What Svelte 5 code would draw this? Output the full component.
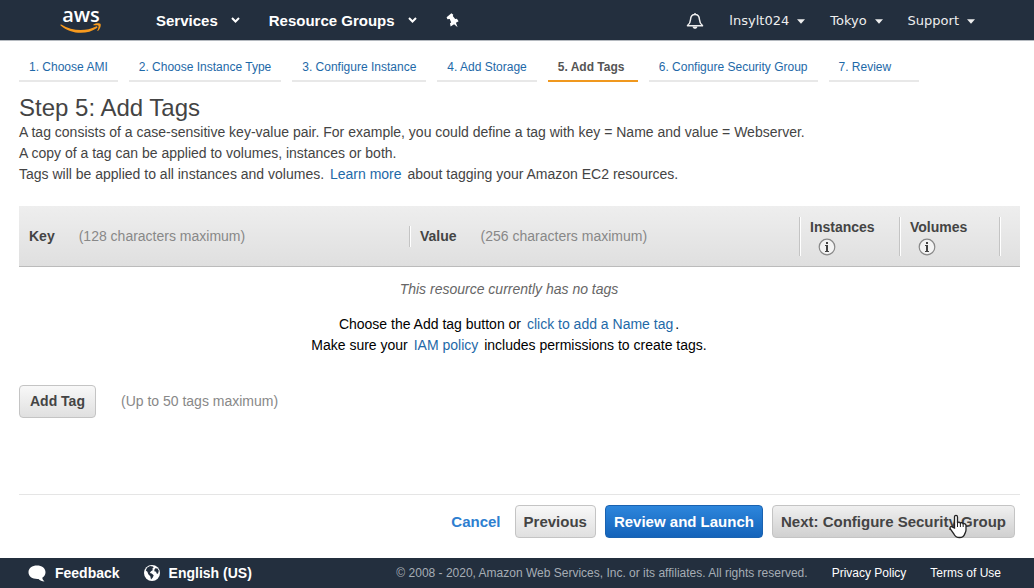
<script>
	const steps = [
		'1. Choose AMI',
		'2. Choose Instance Type',
		'3. Configure Instance',
		'4. Add Storage',
		'5. Add Tags',
		'6. Configure Security Group',
		'7. Review'
	];
	const account = ['lnsylt024', 'Tokyo', 'Support'];

	let current = 4;
</script>

<div class="page">
	<header>
		<a class="logo" href="/" aria-label="aws">
			<span>aws</span>
			<svg width="42" height="11" viewBox="0 0 42 11">
				<path d="M1.200 1.500C12 8 25 9 36 3.500c1.200-.6 2 .6 1 1.400C27 12 11 11.500.600 2.400c-.6-.6-.1-1.300.600-.900z" fill="#f79a1e" />
				<path d="M33.500 1.500c2-1.500 6.200-1.500 7 -.6s-.3 5.200-2.600 7c-.4.300-.7.100-.5-.3.800-1.800 1.500-4.200 1.100-4.900s-3-.5-4.700-.4c-.5 0-.7-.5-.3-.8z" fill="#f79a1e" />
			</svg>
		</a>
		<nav class="main-nav">
			<button>
				Services
				<svg width="9" height="6" viewBox="0 0 9 6"><path d="M1 1l3.500 3.500L8 1" /></svg>
			</button>
			<button>
				Resource Groups
				<svg width="9" height="6" viewBox="0 0 9 6"><path d="M1 1l3.500 3.500L8 1" /></svg>
			</button>
			<button class="pin" aria-label="Pin shortcuts">
				<svg width="13" height="15" viewBox="0 0 13 15">
					<path d="M.6 4.200L5.400.300l1.900 1.400-.5 1.300 2.400 3 1.700-.3 1.700 2.600-2.700 1.500 1.700 4.500-3.500-3.100-3.500 2.400L4 10.300l1.200-.9L3.700 5.900l-2.300.3z" />
				</svg>
			</button>
		</nav>
		<nav class="account-nav">
			<button aria-label="Notifications">
				<svg width="18" height="18" viewBox="0 0 18 18">
					<path class="outline" d="M9 1v1.500M1.500 13.700c2.200-1.700 2.800-3 3-6C4.700 4.300 6.200 2.500 9 2.500s4.300 1.800 4.500 5.200c.2 3 .8 4.300 3 6z" />
					<path d="M6.500 14.500h5c-.3 1.600-1.300 2.300-2.500 2.300s-2.200-.7-2.500-2.300z" />
				</svg>
			</button>
			{#each account as item}
				<button>
					{item}
					<svg width="8" height="5" viewBox="0 0 8 5"><path d="M0 .300h8L4 4.800z" /></svg>
				</button>
			{/each}
		</nav>
	</header>

	<main>
		<ol class="steps">
			{#each steps as step, i}
				<li class:active={i === current}>
					{#if i === current}
						{step}
					{:else}
						<a href="#step{i + 1}">{step}</a>
					{/if}
				</li>
			{/each}
		</ol>

		<h1>Step 5: Add Tags</h1>
		<p>
			A tag consists of a case-sensitive key-value pair. For example, you could define a tag with key = Name and value = Webserver.<br />
			A copy of a tag can be applied to volumes, instances or both.<br />
			Tags will be applied to all instances and volumes. <a class="inline" href="#learn">Learn more</a> about tagging your Amazon EC2 resources.
		</p>

		<table>
			<thead>
				<tr>
					<th><div class="cell">Key <span class="hint">(128 characters maximum)</span></div></th>
					<th><div class="cell value">Value <span class="hint">(256 characters maximum)</span></div></th>
					{#each ['Instances', 'Volumes'] as name}
						<th class="narrow">
							<div class="cell check">
								{name}
								<svg width="18" height="18" viewBox="0 0 18 18">
									<circle cx="9" cy="9" r="7.800" fill="#f4f4f4" stroke="#888" stroke-width="1.200" />
									<path d="M8 4h2v2H8zM7 7h3v6h1v1H7v-1h1V8H7z" fill="#444" />
								</svg>
							</div>
						</th>
					{/each}
					<td class="end"><div class="cell check"></div></td>
				</tr>
			</thead>
			<tbody>
				<tr>
					<td colspan="4" class="empty">
						<em>This resource currently has no tags</em>
						<p>
							Choose the Add tag button or <a class="inline" href="#name-tag">click to add a Name tag</a>.<br />
							Make sure your <a class="inline" href="#iam">IAM policy</a> includes permissions to create tags.
						</p>
					</td>
					<td></td>
				</tr>
			</tbody>
		</table>

		<div class="add">
			<button class="btn">Add Tag</button>
			<span class="hint">(Up to 50 tags maximum)</span>
		</div>

		<div class="actions">
			<a class="cancel" href="#cancel">Cancel</a>
			<button class="btn">Previous</button>
			<button class="btn primary">Review and Launch</button>
			<button class="btn hover">
				Next: Configure Security Group
				<svg class="pointer" width="19" height="25" viewBox="0 0 19 25">
					<path d="M5.500 14V3c0-2.300 3-2.300 3 0v6c.6-1.300 2.600-1 2.900.3.700-1 2.500-.7 2.800.7.900-.8 2.800-.2 2.800 1.400V16c0 2-1 3-1.500 4.500-.7 2-2 3-5 3-3.400 0-4.500-1.300-5.500-3.300L1.300 15c-.9-2 .9-3.200 2.300-1.900z" fill="#fff" stroke="#222" stroke-width="1.300" />
					<path d="M8.500 9v4M11.400 9.500V13M14.200 10.500V13" stroke="#222" />
				</svg>
			</button>
		</div>
	</main>

	<footer>
		<button>
			<svg width="18" height="17" viewBox="0 0 18 17">
				<path d="M9 .5c4.800 0 8.500 2.700 8.500 6.700 0 2.500-1.300 4.400-3.200 5.600.2 1.400.8 2.500 2.200 3.700-2.600-.2-4.600-1-6-2.600C4.700 14.300.500 11.500.500 7.200.500 3.200 4.200.500 9 .500z" fill="#fff" />
			</svg>
			Feedback
		</button>
		<button>
			<svg width="16" height="16" viewBox="0 0 16 16">
				<circle cx="8" cy="8" r="8" fill="#fff" />
				<path d="M3 2.800L6 1l3 .4.600 1.400-1.400.9.700 1.200L7 6.300 5.800 8l1.900.5 2 1.800-.9 2.200L7 14.600l-.7-3.400-2-2L3.400 6.800 1.800 5.500zM11.200 3.300l2.300.1 1.300 2.400-.8 3-1.400-.2-.5-1.900-1.800-.5.200-1.600z" fill="#232f3e" />
			</svg>
			English (US)
		</button>
		<small>© 2008 - 2020, Amazon Web Services, Inc. or its affiliates. All rights reserved.</small>
		<a href="#privacy">Privacy Policy</a>
		<a href="#terms">Terms of Use</a>
	</footer>
</div>

<style>
	:global(body) {
		background: #fff;
		color: #444;
		font-family: "Liberation Sans", Arial, sans-serif;
		font-size: 14px;
		line-height: 21px;
	}

	.page {
		display: flex;
		flex-direction: column;
		min-height: 100vh;
	}

	button {
		font: inherit;
		margin: 0;
		cursor: pointer;
	}

	a {
		color: #1e69a8;
		text-decoration: none;
	}

	header {
		display: flex;
		align-items: center;
		height: 41px;
		padding: 0 59px 0 60px;
		background: #232f3e;
		border-bottom: 1px solid #b5bac0;
		box-sizing: border-box;
	}

	header button,
	footer button {
		display: flex;
		align-items: center;
		padding: 0;
		border: 0;
		background: none;
		color: #fff;
		white-space: nowrap;
	}

	.logo {
		display: flex;
		flex-direction: column;
		width: 42px;
		color: #fff;
		font: 600 20px/17px "Open Sans", sans-serif;
		text-align: center;
	}

	.main-nav {
		display: flex;
		flex: 1;
		gap: 29px;
		margin-left: 54px;
		font-size: 15px;
		font-weight: bold;
	}

	.main-nav button {
		gap: 13px;
	}

	.main-nav path {
		fill: none;
		stroke: #fff;
		stroke-width: 2;
	}

	.main-nav .pin path {
		fill: #fff;
		stroke: none;
	}

	.account-nav {
		display: flex;
		gap: 25px;
		padding-top: 2px;
		font: 13px/20px "DejaVu Sans", Verdana, sans-serif;
	}

	.account-nav button {
		gap: 8px;
		color: #eee;
	}

	.account-nav path {
		fill: #eee;
	}

	.account-nav .outline {
		fill: none;
		stroke: #eee;
		stroke-width: 1.5;
		stroke-linejoin: round;
	}

	main {
		display: flex;
		flex: 1;
		flex-direction: column;
		padding: 14px 14px 20px 19px;
	}

	.steps {
		display: flex;
		gap: 11px;
		margin: 0;
		padding: 0;
		list-style: none;
		font-size: 12px;
		white-space: nowrap;
	}

	.steps li {
		min-width: 90px;
		padding: 2px 10px;
		border-bottom: 2px solid #e8e8e8;
		box-sizing: border-box;
	}

	.steps .active {
		border-color: #f0981e;
		color: #555;
		font-weight: bold;
	}

	h1 {
		margin: 12px 0 0;
		font-size: 24px;
		font-weight: normal;
		line-height: 28px;
	}

	p {
		margin: 0;
	}

	.inline {
		margin: 0 2px;
	}

	table {
		width: 100%;
		margin-top: 21px;
		border-spacing: 0;
		table-layout: fixed;
	}

	thead tr {
		background: linear-gradient(#eee, #dfdfdf);
	}

	th,
	td {
		padding: 0;
		text-align: left;
	}

	thead th,
	thead td {
		height: 60px;
		border-bottom: 1px solid #bbb;
	}

	.narrow {
		width: 100px;
	}

	.end {
		width: 21px;
	}

	.cell {
		display: flex;
		align-items: center;
		gap: 24px;
		padding-left: 10px;
	}

	.value,
	.check {
		border-left: 1px solid #c4c4c4;
		box-shadow: inset 1px 0 #fff;
	}

	.check {
		flex-direction: column;
		align-items: flex-start;
		gap: 0;
		height: 39px;
	}

	.check svg {
		margin-left: 8px;
	}

	.hint {
		color: #888;
		font-weight: normal;
	}

	.empty {
		padding-top: 12px;
		color: #000;
		text-align: center;
	}

	.empty em {
		color: #666;
	}

	.empty p {
		margin-top: 14px;
	}

	.add {
		display: flex;
		align-items: center;
		gap: 25px;
		margin-top: 29px;
	}

	.btn {
		position: relative;
		height: 33px;
		padding: 0 10px;
		border: 1px solid #c4c4c4;
		border-radius: 4px;
		background: linear-gradient(#f8f8f8, #e0e0e0);
		color: #444;
		font-weight: bold;
		white-space: nowrap;
	}

	.primary {
		border-color: #1a62b0;
		background: linear-gradient(#2d86dc, #1463ba);
		color: #fff;
	}

	.hover {
		background: linear-gradient(#f0f0f0, #d0d0d0);
	}

	.pointer {
		position: absolute;
		top: 8px;
		right: 46px;
	}

	.actions {
		display: flex;
		align-items: center;
		justify-content: flex-end;
		gap: 9px;
		margin-top: auto;
		padding: 10px 5px 0 0;
		border-top: 1px solid #e5e5e5;
		font-size: 15px;
	}

	.actions .btn {
		padding: 0 8px;
	}

	.cancel {
		margin-right: 5px;
		color: #2e7fd0;
		font-weight: bold;
	}

	footer {
		display: flex;
		align-items: center;
		gap: 24px;
		height: 30px;
		padding: 0 33px 0 28px;
		background: #232f3e;
		font-size: 12px;
		white-space: nowrap;
	}

	footer button {
		gap: 9px;
		font-size: 14px;
		font-weight: bold;
	}

	footer small {
		margin-left: auto;
		color: #a6adb5;
		font-size: 12px;
	}

	footer a {
		color: #fff;
	}
</style>
